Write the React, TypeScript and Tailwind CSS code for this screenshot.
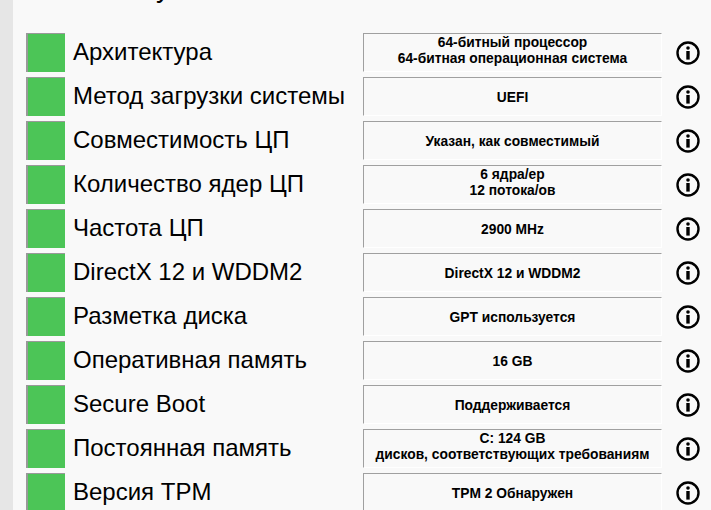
const rows: { label: string; value: string[] }[] = [
  { label: "Архитектура", value: ["64-битный процессор", "64-битная операционная система"] },
  { label: "Метод загрузки системы", value: ["UEFI"] },
  { label: "Совместимость ЦП", value: ["Указан, как совместимый"] },
  { label: "Количество ядер ЦП", value: ["6 ядра/ер", "12 потока/ов"] },
  { label: "Частота ЦП", value: ["2900 MHz"] },
  { label: "DirectX 12 и WDDM2", value: ["DirectX 12 и WDDM2"] },
  { label: "Разметка диска", value: ["GPT используется"] },
  { label: "Оперативная память", value: ["16 GB"] },
  { label: "Secure Boot", value: ["Поддерживается"] },
  { label: "Постоянная память", value: ["C: 124 GB", "дисков, соответствующих требованиям"] },
  { label: "Версия TPM", value: ["TPM 2 Обнаружен"] },
];

const InfoIcon = () => (
  <svg width="26" height="26" viewBox="0 0 26 26" fill="none">
    <circle cx="13" cy="13" r="10.5" stroke="#000" strokeWidth="2.4" />
    <circle cx="13" cy="8" r="1.8" fill="#000" />
    <rect x="11.3" y="11" width="3.4" height="8.6" fill="#000" />
  </svg>
);

const App = () => {
  return (
    <div className="flex h-[510px] w-[711px] overflow-hidden bg-[#f9f9f9] font-['Liberation_Sans',Arial,sans-serif] text-black">
      <div className="w-[13px] shrink-0 bg-[#e6e6e6]" />
      <div className="relative flex-1 pl-[13px] pt-[33px]">
        <div className="absolute left-[143px] top-[-29px] text-[28px] leading-[33px]">у</div>
        <div className="flex flex-col gap-[5px]">
          {rows.map((row) => (
            <div key={row.label} className="flex h-[39px] shrink-0 items-center">
              <div className="h-[39px] w-[39px] shrink-0 border-l-2 border-t border-[#999] bg-[#4cc557]" />
              <div className="h-[39px] w-[298px] shrink-0 pl-[8px] text-[24px] leading-[38px]">{row.label}</div>
              <div
                className={
                  row.value.length > 1
                    ? "flex h-[39px] w-[299px] shrink-0 flex-col items-center justify-center border border-b-white border-l-[#a0a0a0] border-r-white border-t-[#a0a0a0] pb-[3px] text-[13.8px] font-bold leading-[16px]"
                    : "flex h-[39px] w-[299px] shrink-0 flex-col items-center justify-center border border-b-white border-l-[#a0a0a0] border-r-white border-t-[#a0a0a0] pt-[2px] text-[13.8px] font-bold leading-[16px]"
                }
              >
                {row.value.map((line) => (
                  <span key={line} className="whitespace-nowrap">{line}</span>
                ))}
              </div>
              <div className="ml-[13px] flex shrink-0 items-center">
                <InfoIcon />
              </div>
            </div>
          ))}
        </div>
      </div>
    </div>
  );
};

export default App;
